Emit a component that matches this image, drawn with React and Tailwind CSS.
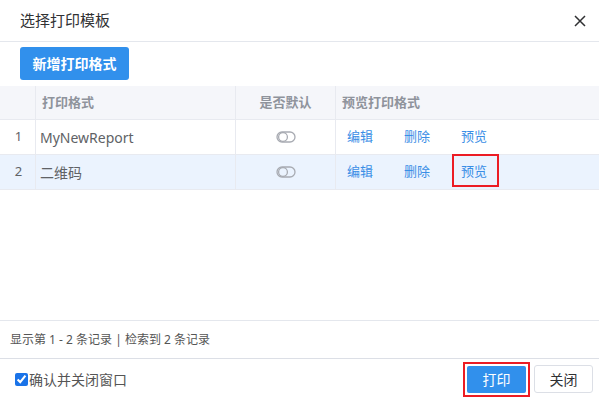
import React, { useState } from 'react';

const rows = [
  { id: 1, name: 'MyNewReport' },
  { id: 2, name: '二维码' },
];

const Toggle = () => (
  <svg width="20" height="12" viewBox="0 0 20 12" fill="none" stroke="#a8abb2" strokeWidth="1.3">
    <rect x="1" y="1" width="18" height="10" rx="5" />
    <circle cx="7" cy="6" r="4.4" />
  </svg>
);

const App = () => {
  const [confirmClose, setConfirmClose] = useState(true);

  return (
    <div
      className="w-[599px] h-[399px] bg-white flex flex-col text-[13px] text-[#606266]"
      style={{ fontFamily: '"Noto Sans", "Noto Sans CJK SC", sans-serif' }}
    >
      {/* header */}
      <div className="h-[42px] shrink-0 flex items-center justify-between pl-[20px] pr-[12px] border-b border-[#e4e7ed]">
        <span className="text-[15px] text-[#303133]">选择打印模板</span>
        <svg width="14" height="14" viewBox="0 0 14 14" stroke="#303133" strokeWidth="1.5">
          <path d="M2 2 L12 12 M12 2 L2 12" />
        </svg>
      </div>

      <div className="px-[20px] pt-[5px] pb-[6px]">
        <button className="w-[109px] h-[33px] rounded-[3px] bg-[#3190ec] text-white text-[14px] font-bold">
          新增打印格式
        </button>
      </div>

      {/* table */}
      <div className="flex-1">
        <div className="flex h-[34px] bg-[#f5f6fa] border-b border-[#e8eaf0] font-bold text-[#8f939c]">
          <div className="w-[36px] border-r border-[#e8eaf0]" />
          <div className="w-[200px] border-r border-[#e8eaf0] flex items-center pl-[6px]">打印格式</div>
          <div className="w-[100px] border-r border-[#e8eaf0] flex items-center justify-center">是否默认</div>
          <div className="flex-1 flex items-center pl-[6px]">预览打印格式</div>
        </div>
        {rows.map((r) => (
          <div
            key={r.id}
            className={`flex h-[35px] border-b border-[#e8eaf0] ${r.id === 2 ? 'bg-[#ebf3fe]' : 'bg-white'}`}
          >
            <div className="w-[36px] border-r border-[#e8eaf0] flex items-center justify-center pl-[2px]">{r.id}</div>
            <div className="w-[200px] border-r border-[#e8eaf0] flex items-center pl-[4px] text-[14px]">{r.name}</div>
            <div className="w-[100px] border-r border-[#e8eaf0] flex items-center justify-center">
              <Toggle />
            </div>
            <div className="flex-1 flex items-center pl-[11px] text-[#3a8ee6]">
              <span className="w-[57px]">编辑</span>
              <span className="w-[57px]">删除</span>
              <span
                className={`relative ${r.id === 2 ? 'after:absolute after:content-[""] after:left-[-9px] after:right-[-12px] after:top-[-8px] after:bottom-[-5px] after:border-2 after:border-[#ec1c24]' : ''}`}
              >
                预览
              </span>
            </div>
          </div>
        ))}
      </div>

      {/* pager */}
      <div className="h-[38px] shrink-0 border-t border-[#e4e7ed] flex items-center pl-[10px] text-[12px] text-[#555]">
        显示第 1 - 2 条记录 | 检索到 2 条记录
      </div>

      {/* footer */}
      <div className="h-[41px] shrink-0 border-t border-[#dcdfe6] flex items-center justify-between pl-[15px] pr-[6px]">
        <label className="flex items-center gap-[1px] text-[14px] text-[#555]">
          <input
            type="checkbox"
            checked={confirmClose}
            onChange={(e) => setConfirmClose(e.target.checked)}
            className="w-[13px] h-[13px] accent-[#1a73e8]"
          />
          确认并关闭窗口
        </label>
        <div className="flex items-center gap-[4px]">
          <div className="border-2 border-[#ec1c24] p-[2px]">
            <button className="w-[59px] h-[27px] rounded-[2px] bg-[#3190ec] text-white text-[14px]">打印</button>
          </div>
          <button className="w-[59px] h-[28px] rounded-[3px] border border-[#dcdfe6] bg-white text-[#303133] text-[14px]">
            关闭
          </button>
        </div>
      </div>
    </div>
  );
};

export default App;
